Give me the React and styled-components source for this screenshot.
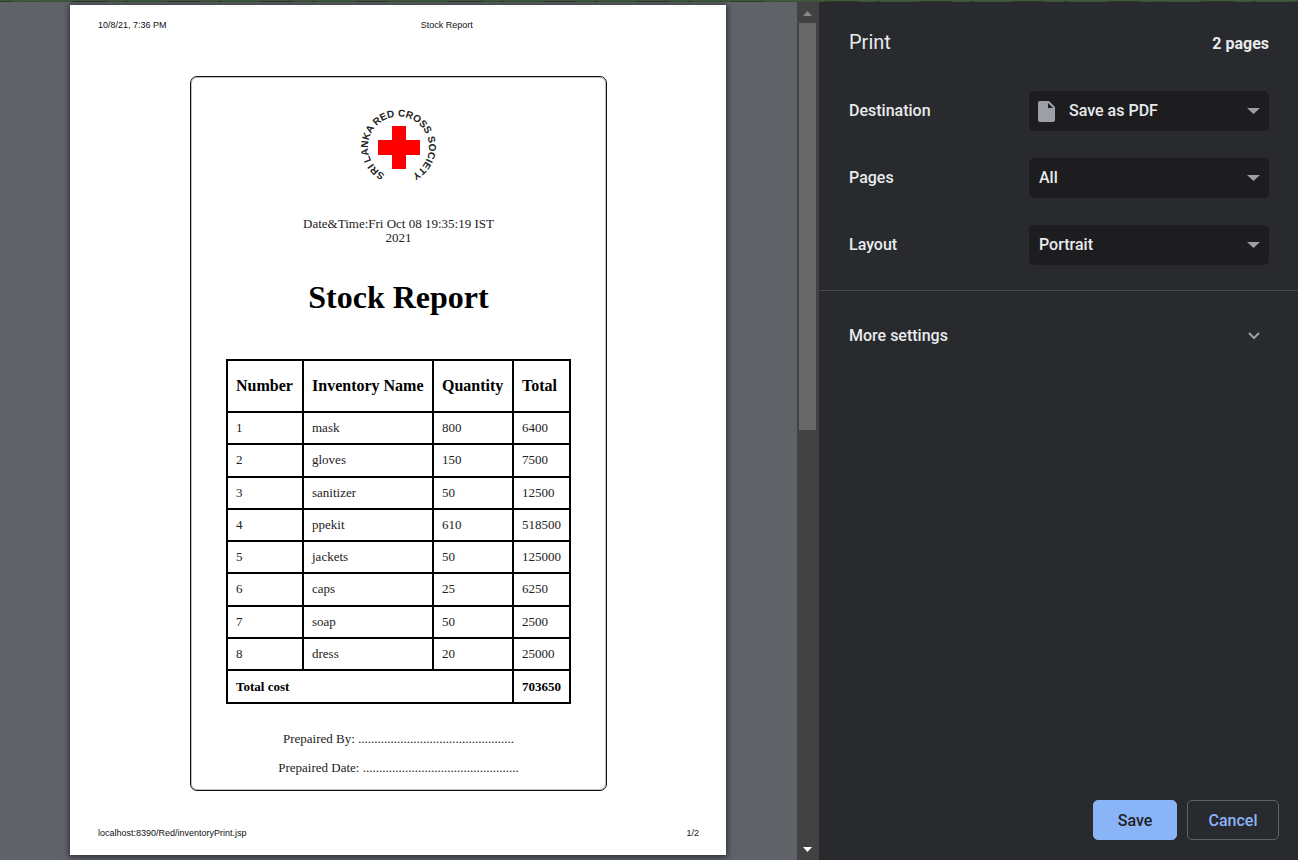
import React from "react";
import styled, { createGlobalStyle } from "styled-components";

const GlobalStyle = createGlobalStyle`
  *, *::before, *::after { box-sizing: border-box; }
  body { margin: 0; background: #292a2d; }
`;

const Dialog = styled.div`
  display: grid;
  grid-template-rows: 2px 1fr;
  min-height: 100vh;
`;

const WindowEdge = styled.div`
  background:
    repeating-linear-gradient(90deg, #2b3a29 0 12px, #3c5238 12px 30px, #2f402c 30px 34px, #3c5238 34px 73px, #2b3a29 73px 94px)
      0 1px / 100% 1px no-repeat,
    #40593c;
`;

const Panes = styled.div`
  display: grid;
  grid-template-columns: minmax(0, 1fr) 22px 479px;
`;

/* Preview */

const Preview = styled.main`
  padding: 3px 17px 5px 16px;
  background: #5f6368;
`;

const Sheet = styled.article`
  display: flex;
  flex-direction: column;
  max-width: 656px;
  margin: 0 auto;
  padding: 14px 27px 16px 28px;
  background: #fff;
  color: #000;
  box-shadow: 0 1px 6px 1px rgba(0, 0, 0, 0.55);
`;

const RunningLine = styled.div`
  display: flex;
  justify-content: space-between;
  font: 9px/12px "Liberation Sans", Arial, sans-serif;
  color: #111;
`;

const RunningTitle = styled.span`
  flex: 1;
  padding-left: 28px;
  text-align: center;
`;

const Frame = styled.section`
  display: flex;
  flex-direction: column;
  align-items: center;
  width: 417px;
  max-width: 100%;
  margin: 45px auto 36px;
  padding: 30px 32px 15px;
  border: 1px solid #111;
  border-radius: 7px;
  box-shadow: inset 0 0 0 1px rgba(0, 0, 0, 0.25);
  font: 13px/14px "Liberation Serif", "Times New Roman", serif;
`;

const Timestamp = styled.p`
  max-width: 200px;
  margin: 30px 0 33px;
  text-align: center;
  color: #222;
`;

const ReportTitle = styled.h1`
  margin: 0 0 43px;
  font-size: 32px;
  line-height: 38px;
  font-weight: 700;
`;

const StockTable = styled.table`
  width: 345px;
  height: 345px;
  border-collapse: collapse;
  table-layout: fixed;
`;

const Column = styled.col`
  width: ${(p) => p.$width}px;
`;

const Row = styled.tr`
  height: ${(p) => p.$height || 32}px;
`;

const HeadCell = styled.th`
  padding: 0 8px;
  border: 2px solid #000;
  font-size: 16px;
  text-align: left;
  white-space: nowrap;
`;

const Cell = styled.td`
  padding: 0 8px;
  border: 2px solid #000;
  color: ${(p) => (p.$strong ? "#000" : "#222")};
  font-weight: ${(p) => (p.$strong ? 700 : 400)};
`;

const Signatures = styled.div`
  display: grid;
  gap: 15px;
  margin-top: 28px;
  text-align: center;
  white-space: nowrap;
  color: #222;
`;

/* Preview scrollbar */

const Scrollbar = styled.div`
  display: flex;
  flex-direction: column;
  align-items: center;
  padding: 9px 3px 8px 2px;
  background: #424242;
`;

const ScrollThumb = styled.div`
  width: 17px;
  height: calc(50% - 14px);
  margin: 7px 0 auto;
  background: #686868;
`;

/* Settings */

const Sidebar = styled.aside`
  display: flex;
  flex-direction: column;
  background: #292a2d;
  color: #e8eaed;
  font: 500 16px/20px Roboto, sans-serif;
`;

const SidebarHeader = styled.header`
  display: flex;
  justify-content: space-between;
  align-items: baseline;
  padding: 28px 29px 37px 30px;
`;

const SidebarTitle = styled.h2`
  margin: 0;
  font-size: 20px;
  line-height: 24px;
  font-weight: 400;
`;

const PageCount = styled.span`
  font-weight: 700;
`;

const Settings = styled.div`
  display: grid;
  gap: 27px;
  padding: 0 29px 25px 30px;
  border-bottom: 1px solid #46484c;
`;

const Setting = styled.div`
  display: flex;
  justify-content: space-between;
  align-items: center;
`;

const SelectBox = styled.div`
  display: grid;
  align-items: center;
  width: 240px;

  > * { grid-area: 1 / 1; }
  > svg { pointer-events: none; }
`;

const Select = styled.select`
  width: 100%;
  height: 40px;
  padding: 0 32px 0 ${(p) => (p.$withIcon ? 40 : 10)}px;
  border: 0;
  border-radius: 5px;
  appearance: none;
  background: #1d1d1f;
  color: inherit;
  font: inherit;
`;

const Caret = styled.svg`
  justify-self: end;
  margin-right: 9px;
  fill: #9aa0a6;
`;

const FileIcon = styled.svg`
  margin-left: 9px;
`;

const MoreSettings = styled.button`
  display: flex;
  justify-content: space-between;
  align-items: center;
  padding: 35px 38px 35px 30px;
  border: 0;
  background: none;
  color: inherit;
  font: inherit;
  cursor: pointer;
`;

const Actions = styled.footer`
  display: flex;
  justify-content: flex-end;
  gap: 10px;
  margin-top: auto;
  padding: 0 19px 20px;
`;

const Button = styled.button`
  min-width: ${(p) => (p.$primary ? 84 : 92)}px;
  height: 40px;
  padding: 2px 16px 0;
  border: 1px solid ${(p) => (p.$primary ? "#8ab4f8" : "#5f6368")};
  border-radius: 5px;
  background: ${(p) => (p.$primary ? "#8ab4f8" : "transparent")};
  color: ${(p) => (p.$primary ? "#202124" : "#8ab4f8")};
  font: inherit;
  cursor: pointer;
`;

const stock = [
  ["mask", 800, 6400],
  ["gloves", 150, 7500],
  ["sanitizer", 50, 12500],
  ["ppekit", 610, 518500],
  ["jackets", 50, 125000],
  ["caps", 25, 6250],
  ["soap", 50, 2500],
  ["dress", 20, 25000],
];

const dots = ".".repeat(48);

function Logo() {
  return (
    <svg width="80" height="80" viewBox="0 0 80 80" role="img" aria-label="Sri Lanka Red Cross Society">
      <defs>
        <path id="ring" d="M39.500 70.500 A30.500 30.500 0 1 1 39.510 70.500" />
      </defs>
      <path d="M33 19h14v14h14v15H47v14H33V48H19V33h14z" fill="#f00" />
      <text fontFamily="Liberation Sans, Arial, sans-serif" fontSize="10" fontWeight="700" fill="#222" textAnchor="middle">
        <textPath href="#ring" startOffset="50%">SRI LANKA RED CROSS SOCIETY</textPath>
      </text>
    </svg>
  );
}

function SelectField({ id, label, value, icon }) {
  return (
    <Setting>
      <label htmlFor={id}>{label}</label>
      <SelectBox>
        <Select id={id} $withIcon={Boolean(icon)} defaultValue={value}>
          <option>{value}</option>
        </Select>
        {icon}
        <Caret width="13" height="6" viewBox="0 0 13 6" aria-hidden="true">
          <path d="M0 0h13L6.500 6z" />
        </Caret>
      </SelectBox>
    </Setting>
  );
}

export default function App() {
  return (
    <Dialog>
      <GlobalStyle />
      <WindowEdge />
      <Panes>
        <Preview>
          <Sheet>
            <RunningLine>
              <span>10/8/21, 7:36 PM</span>
              <RunningTitle>Stock Report</RunningTitle>
            </RunningLine>
            <Frame>
              <Logo />
              <Timestamp>Date&amp;Time:Fri Oct 08 19:35:19 IST 2021</Timestamp>
              <ReportTitle>Stock Report</ReportTitle>
              <StockTable>
                <colgroup>
                  <Column $width={76} />
                  <Column $width={130} />
                  <Column $width={80} />
                  <Column $width={57} />
                </colgroup>
                <thead>
                  <Row $height={52}>
                    <HeadCell>Number</HeadCell>
                    <HeadCell>Inventory Name</HeadCell>
                    <HeadCell>Quantity</HeadCell>
                    <HeadCell>Total</HeadCell>
                  </Row>
                </thead>
                <tbody>
                  {stock.map(([name, quantity, total], i) => (
                    <Row key={name}>
                      <Cell>{i + 1}</Cell>
                      <Cell>{name}</Cell>
                      <Cell>{quantity}</Cell>
                      <Cell>{total}</Cell>
                    </Row>
                  ))}
                </tbody>
                <tfoot>
                  <Row $height={33}>
                    <Cell $strong colSpan={3}>Total cost</Cell>
                    <Cell $strong>703650</Cell>
                  </Row>
                </tfoot>
              </StockTable>
              <Signatures>
                <div>Prepaired By: {dots}</div>
                <div>Prepaired Date: {dots}</div>
              </Signatures>
            </Frame>
            <RunningLine>
              <span>localhost:8390/Red/inventoryPrint.jsp</span>
              <span>1/2</span>
            </RunningLine>
          </Sheet>
        </Preview>

        <Scrollbar aria-hidden="true">
          <svg width="9" height="5" viewBox="0 0 9 5"><path d="M0 5L4.500 0L9 5z" fill="#888" /></svg>
          <ScrollThumb />
          <svg width="9" height="5" viewBox="0 0 9 5"><path d="M0 0L4.500 5L9 0z" fill="#fff" /></svg>
        </Scrollbar>

        <Sidebar>
          <SidebarHeader>
            <SidebarTitle>Print</SidebarTitle>
            <PageCount>2 pages</PageCount>
          </SidebarHeader>
          <Settings>
            <SelectField
              id="destination"
              label="Destination"
              value="Save as PDF"
              icon={
                <FileIcon width="17" height="21" viewBox="0 0 17 21" aria-hidden="true">
                  <path d="M2 0h9l6 6v13a2 2 0 0 1-2 2H2a2 2 0 0 1-2-2V2a2 2 0 0 1 2-2z" fill="#9aa0a6" />
                  <path d="M10 2v5h5z" fill="#1d1d1f" />
                </FileIcon>
              }
            />
            <SelectField id="pages" label="Pages" value="All" />
            <SelectField id="layout" label="Layout" value="Portrait" />
          </Settings>
          <MoreSettings type="button" aria-expanded="false">
            More settings
            <svg width="12" height="8" viewBox="0 0 12 8" fill="none" stroke="#9aa0a6" strokeWidth="2" aria-hidden="true">
              <path d="M1 1l5 5 5-5" />
            </svg>
          </MoreSettings>
          <Actions>
            <Button type="button" $primary>Save</Button>
            <Button type="button">Cancel</Button>
          </Actions>
        </Sidebar>
      </Panes>
    </Dialog>
  );
}
